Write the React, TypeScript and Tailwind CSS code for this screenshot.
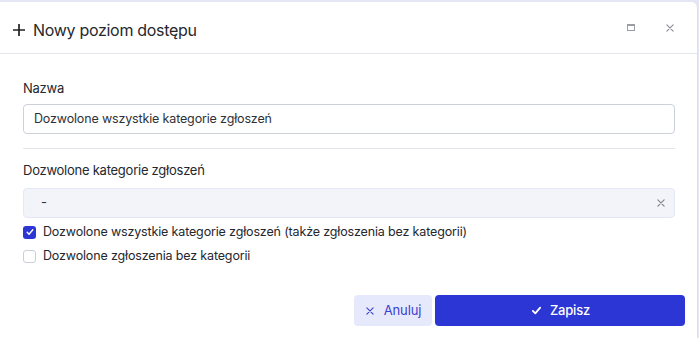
import React from "react";

const Check = ({ className }: { className?: string }) => (
  <svg viewBox="0 0 16 16" className={className} fill="none" stroke="currentColor" strokeWidth={2.2} strokeLinecap="round" strokeLinejoin="round">
    <path d="M3.5 8.5l3 3 6-7" />
  </svg>
);

const Cross = ({ className }: { className?: string }) => (
  <svg viewBox="0 0 16 16" className={className} fill="none" stroke="currentColor" strokeWidth={1.8} strokeLinecap="round">
    <path d="M3 3l10 10M13 3L3 13" />
  </svg>
);

const CheckRow = ({ checked, label }: { checked?: boolean; label: string }) => (
  <label className="flex items-center h-[20px] gap-[7px] text-[12.5px] tracking-[-0.15px] text-[#24272e]">
    {checked ? (
      <span className="w-[13px] h-[13px] rounded-[3px] bg-[#2c36d4] flex items-center justify-center text-white">
        <Check className="w-[10px] h-[10px]" />
      </span>
    ) : (
      <span className="w-[13px] h-[13px] rounded-[3px] border border-[#c9ced8] bg-white" />
    )}
    <span>{label}</span>
  </label>
);

export default function App() {
  return (
    <div
      className="w-[699px] h-[338px] bg-[#e4e7f3] pt-[2px] overflow-hidden"
      style={{ fontFamily: "Inter, 'Noto Sans', sans-serif" }}
    >
      <div className="w-[698px] h-full bg-white border-r border-[#dde0e6] rounded-tr-[6px]">
        <div className="h-[52px] border-b border-[#e3e5ea] flex items-center pl-[13px] pr-[22px]">
          <div className="mt-[4px] flex items-center">
            <svg viewBox="0 0 12 12" className="w-[12px] h-[12px] text-[#222]" stroke="currentColor" strokeWidth={1.7}>
              <path d="M6 0v12M0 6h12" />
            </svg>
            <h2 className="ml-[8px] text-[16px] tracking-[-0.3px] text-[#26282d] leading-none">Nowy poziom dostępu</h2>
          </div>
          <div className="ml-auto flex items-center gap-[30px] text-[#8a8d93]">
            <span className="w-[8px] h-[7px] border border-[#9a9da3] border-t-[2px]" />
            <Cross className="w-[10px] h-[10px]" />
          </div>
        </div>

        <div className="pl-[23px] pr-[22px] pt-[24px]">
          <div className="text-[13px] tracking-[-0.25px] leading-[20px] text-[#24272e]">Nazwa</div>
          <div className="mt-[6px] h-[30px] border border-[#ccd1da] rounded-[4px] flex items-center px-[10px] text-[12.5px] tracking-[-0.15px] text-[#2f3238]">
            Dozwolone wszystkie kategorie zgłoszeń
          </div>
          <div className="mt-[14px] border-t border-[#e3e5ea]" />
          <div className="mt-[11px] text-[13px] tracking-[-0.25px] leading-[20px] text-[#24272e]">Dozwolone kategorie zgłoszeń</div>
          <div className="mt-[8px] h-[30px] border border-[#e3e8f6] bg-[#f3f4f9] rounded-[4px] flex items-center pl-[17px] pr-[8px] text-[13px] text-[#2f3238]">
            <span>-</span>
            <Cross className="ml-auto w-[10px] h-[10px] text-[#7d8087]" />
          </div>
          <div className="mt-[4px] flex flex-col gap-[4px]">
            <CheckRow checked label="Dozwolone wszystkie kategorie zgłoszeń (także zgłoszenia bez kategorii)" />
            <CheckRow label="Dozwolone zgłoszenia bez kategorii" />
          </div>
        </div>

        <div className="mt-[29px] flex justify-end gap-[3px] pr-[12px]">
          <button className="w-[78px] h-[31px] rounded-[4px] bg-[#e6e9fc] text-[#3a40cf] text-[13px] tracking-[-0.1px] flex items-center justify-center gap-[9px]">
            <Cross className="w-[10px] h-[10px]" />
            Anuluj
          </button>
          <button className="w-[250px] h-[31px] rounded-[4px] bg-[#2c36d4] text-white text-[13px] tracking-[-0.2px] font-medium flex items-center justify-center gap-[7px]">
            <Check className="w-[13px] h-[13px]" />
            Zapisz
          </button>
        </div>
      </div>
    </div>
  );
}
